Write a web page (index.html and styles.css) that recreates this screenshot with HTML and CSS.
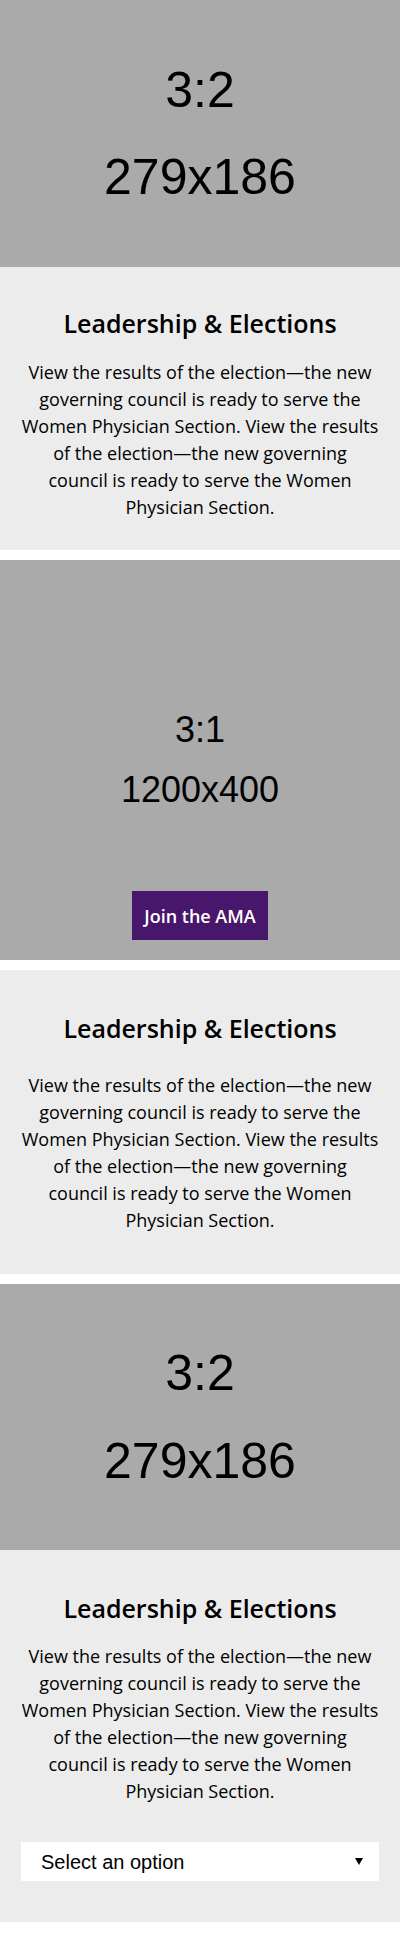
FILE: index.html
```html
<!DOCTYPE html>
<html lang="en">
<head>
<meta charset="utf-8">
<title>Women Physician Section</title>
<link rel="stylesheet" href="styles.css">
</head>
<body>
  <article class="card">
    <div class="media media--32">
      <span class="media__line">3:2</span>
      <span class="media__line">279x186</span>
    </div>
    <div class="card__body card__body--a">
      <h2 class="card__title">Leadership &amp; Elections</h2>
      <p class="card__text">View the results of the election—the new governing council is ready to serve the Women Physician Section. View the results of the election—the new governing council&nbsp;is ready to serve the Women Physician Section.</p>
    </div>
  </article>

  <section class="hero">
    <div class="hero__media">
      <span class="hero__line">3:1</span>
      <span class="hero__line">1200x400</span>
    </div>
    <a class="hero__btn" href="#">Join the AMA</a>
  </section>

  <article class="card">
    <div class="card__body card__body--b">
      <h2 class="card__title">Leadership &amp; Elections</h2>
      <p class="card__text">View the results of the election—the new governing council is ready to serve the Women Physician Section. View the results of the election—the new governing council&nbsp;is ready to serve the Women Physician Section.</p>
    </div>
  </article>

  <article class="card">
    <div class="media media--32">
      <span class="media__line">3:2</span>
      <span class="media__line">279x186</span>
    </div>
    <div class="card__body card__body--c">
      <h2 class="card__title">Leadership &amp; Elections</h2>
      <p class="card__text">View the results of the election—the new governing council is ready to serve the Women Physician Section. View the results of the election—the new governing council&nbsp;is ready to serve the Women Physician Section.</p>
      <div class="select-wrap">
        <select class="select" aria-label="Select an option">
          <option>Select an option</option>
        </select>
        <svg class="select-wrap__arrow" width="8" height="7" viewBox="0 0 8 7" aria-hidden="true"><polygon points="0,0 8,0 4,7" fill="#000"/></svg>
      </div>
    </div>
  </article>
</body>
</html>
```

FILE: styles.css
```css
* { box-sizing: border-box; }

body {
  margin: 0;
  background: #ffffff;
  font-family: "Open Sans", Lato, sans-serif;
  color: #000;
}

.card,
.hero {
  margin-bottom: 10px;
}

.media {
  background: #aaaaaa;
  display: flex;
  flex-direction: column;
  align-items: center;
  justify-content: center;
  font-family: "Liberation Sans", Arial, sans-serif;
  color: #000;
}

.media--32 {
  height: 266.67px;
  gap: 37.5px;
  font-size: 50px;
}

.media__line {
  line-height: 1;
  filter: blur(0.5px);
}

.card__body {
  background: #ececec;
  padding: 0 20px;
  text-align: center;
}

.card__body--a { padding-top: 41.5px; padding-bottom: 29px; }
.card__body--b { padding-top: 42.5px; padding-bottom: 39.5px; }
.card__body--c { padding-top: 43px; padding-bottom: 41px; }

.card__title {
  margin: 0;
  font-size: 25px;
  line-height: 30px;
  font-weight: 600;
}

.card__text {
  margin: 21px 0 0;
  font-size: 18px;
  line-height: 27px;
}

.card__body--b .card__text { margin-top: 29.5px; }
.card__body--c .card__text { margin-top: 20px; }

.hero {
  position: relative;
}

.hero__media {
  height: 400px;
  background: #aaaaaa;
  display: flex;
  flex-direction: column;
  align-items: center;
  justify-content: center;
  gap: 24.5px;
  font-family: "Liberation Sans", Arial, sans-serif;
  font-size: 36px;
}

.hero__line { line-height: 1; }

.hero__btn {
  position: absolute;
  left: 132px;
  bottom: 20px;
  width: 136px;
  height: 49px;
  display: flex;
  align-items: center;
  justify-content: center;
  background: #48166a;
  color: #fff;
  font-weight: 600;
  font-size: 18px;
  text-decoration: none;
}

.select-wrap {
  position: relative;
  margin: 37px 1px 0;
}

.select {
  display: block;
  width: 100%;
  height: 39px;
  appearance: none;
  -webkit-appearance: none;
  border: 0;
  border-radius: 0;
  background: #fff;
  padding: 0 40px 0 20px;
  font-family: "Liberation Sans", Arial, sans-serif;
  font-size: 20px;
  color: #000;
}

.select-wrap__arrow {
  position: absolute;
  right: 16px;
  top: 16px;
}
```
